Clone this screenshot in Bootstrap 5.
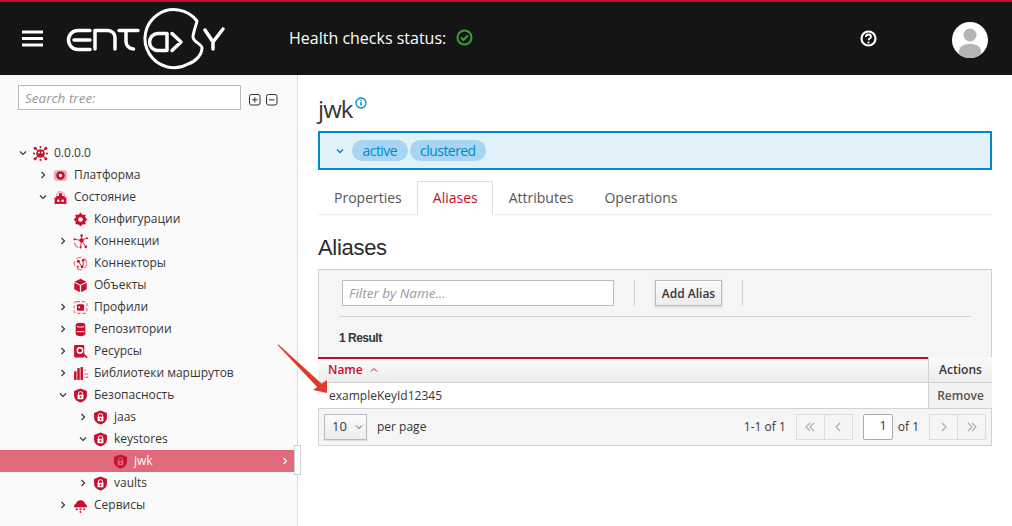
<!DOCTYPE html>
<html lang="ru"><head><meta charset="utf-8"><title>jwk</title>
<link href="https://cdn.jsdelivr.net/npm/bootstrap@5.3.0/dist/css/bootstrap.min.css" rel="stylesheet">
<style>
html,body{height:526px;overflow:hidden}
body{font-family:"Open Sans",sans-serif;font-size:12px;color:#363636;background:#fff;position:relative}
.ent-head{height:75px;background:#151515;border-top:2px solid #c80c2c;padding:0}
.ent-burger{margin-left:22px;width:21px;height:17px;display:block}
.ent-logo{margin-left:23px;display:block}
.ent-health{color:#fff;font-size:16px;margin-left:63px;line-height:20px;margin-top:-2px}
.ent-health svg{margin-left:2px}
.ent-help{margin-left:auto;margin-right:75px;display:block}
.ent-avatar{margin-right:24px;display:block;margin-top:2px}
.ent-main{height:451px}
.ent-side{width:298px;background:#fafafa;border-right:1px solid #ddd;flex:none;position:relative}
.ent-search{padding:10px 0 0 18px;height:67px}
.ent-search input{width:223px;height:25px;border:1px solid #bbb;border-radius:0;font-size:13.5px;font-style:italic;padding:0 6px;line-height:23px;background:#fff;font-family:"Open Sans",sans-serif}
.ent-search input::placeholder{color:#999;opacity:1}
.ent-search svg{display:block;margin-top:8px}
.ent-tree{list-style:none;margin:0;padding:0;width:294px}
.ent-tree li{height:22px;line-height:22px;display:flex;align-items:center;color:#363636;white-space:nowrap;font-size:12px}
.ent-tree .ic{width:15px;height:15px;margin:0 6px 0 0;flex:none}
.ent-tree .chv{width:8px;height:8px;flex:none;margin-right:6px}
.lv0{padding-left:19px}.lv1{padding-left:39px}.lv2{padding-left:59px}.lv3{padding-left:79px}.lv4{padding-left:99px}
.nochv{width:8px;margin-right:6px;flex:none;display:block}
.ent-tree li.sel{background:#e1697c;color:#fff;position:relative}
.sel-arrow{margin-left:auto;margin-right:5px;width:8px;height:8px}
.ent-handle{position:absolute;left:294px;top:370px;width:7px;height:30px;background:#fff;border:1px solid #d1d1d1}
.ent-content{flex:1;padding:0 20px;min-width:0}
.ent-title{font-size:24px;line-height:32px;letter-spacing:-.9px;margin:18px 0 0;padding:0;font-weight:400;display:flex;color:#363636;height:38px}
.ent-title svg{margin:4px 0 0 2px}
.ent-labels{height:39px;border:2px solid #0088ce;background:#e2f2fa;padding:0 0 0 16px;gap:2px;border-radius:0}
.ent-pill{background:#a6d6f1;color:#0088ce;font-size:14px;font-weight:400;height:21px;line-height:21px;padding:0 10.5px;letter-spacing:-.55px;border-radius:11px}
.ent-labels svg{margin-right:6px}
.ent-tabs{margin-top:11px;height:34px;border-bottom:1px solid #ededed;flex-wrap:nowrap}
.ent-tabs .nav-link{font-size:14px;color:#555;padding:0 14px 0 15px;line-height:32px;height:34px;border:1px solid transparent;border-radius:0;background:none;margin:0}
.ent-tabs .nav-link.active{color:#c80c2c;border-color:#dedede #dedede #fff;background:#fff}
.ent-h2{font-family:"Liberation Sans",sans-serif;font-size:22px;font-weight:400;letter-spacing:-.3px;line-height:26px;margin:20px 0 8px;color:#2b2b2b}
.ent-tool{height:88px;background:#f5f5f5;border:1px solid #d1d1d1;border-bottom:0;padding:10px 20px 0 20px}
.ent-filter{width:272px;height:26px;margin-left:3px;border:1px solid #bbb;border-radius:0;font-size:13.5px;font-style:italic;padding:0 6px;background:#fff;font-family:"Open Sans",sans-serif}
.ent-filter::placeholder{color:#999;opacity:1}
.ent-sep{width:1px;height:26px;background:#d1d1d1;margin:0 20px}
.ent-add{height:26px;width:67px;padding:2px 0 0;font-size:12px;font-weight:600;color:#363636;background:linear-gradient(#fafafa,#ededed);border:1px solid #bbb;border-radius:0;box-shadow:0 1px 2px rgba(0,0,0,.15);white-space:nowrap}
.ent-rule{height:1px;background:#d1d1d1;margin:10px 0 0;width:632px}
.ent-count{font-family:"Liberation Sans",sans-serif;font-weight:700;font-size:12px;letter-spacing:-.5px;line-height:16px;margin-top:13px;color:#363636}
.ent-table{width:674px;margin:0;table-layout:fixed;border-collapse:separate;border-spacing:0}
.ent-table th,.ent-table td{padding:0 10px;font-size:12px;box-shadow:none;height:26px}
.ent-table th{background:linear-gradient(#fafafa,#ededed);border-bottom:1px solid #d1d1d1;font-weight:600;vertical-align:middle}
.ent-table th.nm{border-top:2px solid #c00d2b;color:#c80c2c;height:26px;padding-bottom:2px}
.ent-table th.ac{width:64px;border-left:1px solid #d1d1d1;text-align:center;padding:0;color:#363636;border-top:0}
.ent-table td{background:#fff;vertical-align:middle;border-bottom:1px solid #d1d1d1;border-left:1px solid #d1d1d1;color:#363636;font-size:12px}
.ent-table td.ac{background:#f2f2f2;text-align:center;padding:0;font-weight:600;font-size:12px;color:#555;border-right:0}
.ent-table td.kn{border-left:0;padding:1px 0 0 11px}
.ent-foot{height:37px;width:674px;background:#f5f5f5;border:1px solid #d1d1d1;border-top:0;padding:0 5px 0 5px;font-size:12px;color:#363636}
.ent-perpage{width:43px;height:26px;border:1px solid #bbb;background:linear-gradient(#fafafa,#ededed);font-size:13px;font-weight:500;padding:0 0 0 7px;box-shadow:0 1px 1px rgba(0,0,0,.1);color:#363636}
.ent-pp{margin-left:10px}
.ent-range{margin-left:auto;margin-right:10px}
.ent-pgroup{height:26px;border:1px solid #dcdcdc;background:#f5f5f5;width:57px}
.ent-pgroup span{flex:1;display:flex;align-items:center;justify-content:center;height:24px}
.ent-pgroup span+span{border-left:1px solid #dcdcdc}
.ent-page{width:30px;height:26px;border:1px solid #aaa;border-radius:2px;background:#fff;text-align:right;padding:0 5px;font-size:12.5px;line-height:22px;margin:0 5px 0 10px}
.ent-of{margin-right:10px}
.ent-arrow{position:absolute;left:274px;top:342px}
</style></head>
<body>
<svg width="0" height="0" class="d-block position-absolute"><defs>
<symbol id="r" viewBox="0 0 8 8"><path d="M2.500 1l3 3-3 3" fill="none" stroke="currentColor" stroke-width="1.200"/></symbol>
<symbol id="d" viewBox="0 0 8 8"><path d="M1 2.500l3 3 3-3" fill="none" stroke="currentColor" stroke-width="1.200"/></symbol>
<symbol id="node" viewBox="0 0 14 14"><g fill="#c8102e"><circle cx="7" cy="7" r="4"/><circle cx="2" cy="2" r="1.400"/><circle cx="12" cy="2" r="1.400"/><circle cx="2" cy="12" r="1.400"/><circle cx="12" cy="12" r="1.400"/><circle cx="7" cy="1" r="1"/><circle cx="1" cy="7" r="1"/><circle cx="13" cy="7" r="1"/><circle cx="7" cy="13" r="1"/></g><path d="M2 2l10 10M12 2L2 12" stroke="#c8102e"/><circle cx="5.500" cy="6" r=".9" fill="#fff"/><circle cx="8.500" cy="6" r=".9" fill="#fff"/></symbol>
<symbol id="plat" viewBox="0 0 14 14"><rect x="1" y="2" width="12" height="10" rx="2" fill="#f2a9b5"/><circle cx="7" cy="7" r="4" fill="#c8102e"/><circle cx="7" cy="7" r="1.600" fill="#fff"/></symbol>
<symbol id="state" viewBox="0 0 14 14"><path d="M3.500 5a3.500 3.500 0 017 0" fill="none" stroke="#e2697c" stroke-dasharray="2 1"/><rect x="5.500" y="3" width="3" height="3" fill="#c8102e"/><rect x="1.500" y="7" width="11" height="6" fill="#c8102e"/><rect x="3" y="5.500" width="8" height="2" fill="#c8102e"/><rect x="4" y="9" width="2" height="2" fill="#fff"/><rect x="8" y="9" width="2" height="2" fill="#fff"/></symbol>
<symbol id="gear" viewBox="0 0 14 14"><circle cx="7" cy="7" r="3.700" fill="none" stroke="#c8102e" stroke-width="3"/><path d="M7 .8v2M7 11.200v2M.8 7h2M11.200 7h2M2.600 2.600L4 4M10 10l1.400 1.400M2.600 11.400L4 10M10 4l1.400-1.400" stroke="#c8102e" stroke-width="1.600"/></symbol>
<symbol id="conn" viewBox="0 0 14 14"><g fill="#c8102e"><circle cx="8" cy="6" r="2"/><circle cx="8" cy="1.500" r="1.200"/><circle cx="13" cy="4" r="1"/><circle cx="1.500" cy="5" r="1"/><circle cx="12" cy="12" r="1.200"/><circle cx="7" cy="12.500" r="1"/></g><path d="M8 1.500v4l5-1.500M8 6L1.500 5M8 6l4 6M8 6l-1 6.500" stroke="#c8102e" stroke-width=".8" fill="none"/><path d="M1.500 8a5 5 0 003 4.500" stroke="#e2697c" fill="none"/></symbol>
<symbol id="ctor" viewBox="0 0 14 14"><circle cx="7" cy="7" r="5.800" fill="none" stroke="#e2697c" stroke-dasharray="5 2.500"/><g fill="#c8102e"><circle cx="5" cy="5" r="1.400"/><circle cx="9.500" cy="4" r="1.200"/><circle cx="8.500" cy="10" r="1.400"/><circle cx="4.500" cy="10" r="1"/></g><path d="M5 5l3.500 5M9.500 4v5" stroke="#c8102e" stroke-width=".8"/></symbol>
<symbol id="cube" viewBox="0 0 14 14"><path d="M7 .8l5.600 2.700L7 6.200 1.400 3.500zM1.200 4.500l5.200 2.600v6.200l-5.200-2.700zM12.800 4.500L7.600 7.100v6.200l5.200-2.700z" fill="#c8102e"/></symbol>
<symbol id="prof" viewBox="0 0 14 14"><rect x="1" y="1.500" width="12" height="11" rx="2.500" fill="none" stroke="#e2697c" stroke-dasharray="3 1.800"/><rect x="3.700" y="4" width="6.600" height="6" rx="1" fill="#c8102e"/><rect x="5" y="6" width="1.500" height="1.500" fill="#fff"/></symbol>
<symbol id="repo" viewBox="0 0 14 14"><path d="M2.500 3c0-1.400 2-2.200 4.500-2.200S11.500 1.600 11.500 3v8c0 1.400-2 2.200-4.500 2.200S2.500 12.400 2.500 11z" fill="#c8102e"/><path d="M3.500 4.200c1.700.7 5.300.7 7 0M3.500 9h7" stroke="#fff" stroke-width=".9" fill="none"/></symbol>
<symbol id="res" viewBox="0 0 14 14"><rect x="1" y="1" width="9.500" height="11.500" rx="1" fill="#c8102e"/><circle cx="6.500" cy="6" r="3.200" fill="#fff"/><circle cx="6.500" cy="6" r="1.800" fill="#c8102e"/><path d="M9 9l4.200 4" stroke="#c8102e" stroke-width="1.600"/></symbol>
<symbol id="lib" viewBox="0 0 14 14"><g fill="#c8102e"><rect x="1" y="5" width="2.300" height="8"/><rect x="4" y="2" width="2.300" height="11"/><rect x="7" y="1" width="2.300" height="12"/></g><path d="M10.500 4h1.500M10.500 7.500h2.500a1.500 1.500 0 010 3h-2.500" stroke="#e2697c" fill="none"/></symbol>
<symbol id="sec" viewBox="0 0 14 14"><path d="M7 .5l6 2.300v4.200c0 3.400-2.700 5.600-6 6.500C3.700 12.600 1 10.400 1 7V2.800z" fill="#c8102e"/><path d="M5 6.500V5.400a2 2 0 014 0v1.100" fill="none" stroke="#fff" stroke-width=".9"/><rect x="4.300" y="6.300" width="5.400" height="4.200" rx=".5" fill="#fff"/><circle cx="7" cy="8.400" r=".9" fill="#c8102e"/></symbol>
<symbol id="secs" viewBox="0 0 14 14"><path d="M7 .5l6 2.300v4.200c0 3.400-2.700 5.600-6 6.500C3.700 12.600 1 10.400 1 7V2.800z" fill="#c8102e"/><path d="M5 6.500V5.400a2 2 0 014 0v1.100" fill="none" stroke="#e1697c" stroke-width=".9"/><rect x="4.300" y="6.300" width="5.400" height="4.200" rx=".5" fill="#e1697c"/><circle cx="7" cy="8.400" r=".9" fill="#c8102e"/></symbol>
<symbol id="cloud" viewBox="0 0 14 14"><path d="M1 8a2.500 2.500 0 011.800-2.600A4.300 4.300 0 017 2a4.200 4.200 0 014.200 3.400A2.500 2.500 0 0113 8z" fill="#c8102e"/><path d="M1 8h12" stroke="#c8102e" stroke-width="1.500"/><g fill="#c8102e"><circle cx="3.500" cy="10.500" r="1"/><circle cx="7" cy="10.500" r="1"/><circle cx="10.500" cy="10.500" r="1"/><circle cx="7" cy="13" r=".9"/></g></symbol>
</defs></svg>

<header class="navbar ent-head flex-nowrap">
  <svg class="ent-burger" viewBox="0 0 21 17"><path d="M0 2h21M0 8.500h21M0 15h21" stroke="#fff" stroke-width="3"/></svg>
  <svg class="ent-logo" width="160" height="73" viewBox="66 2 160 73" fill="none" stroke="#fff" stroke-width="3.500" stroke-linecap="round" stroke-linejoin="round">
    <path d="M90 30.500H78a9.500 9.500 0 000 19h12M74 40h16"/>
    <path d="M95 49V30.500h13a7 7 0 017 7V49"/>
    <path d="M119 30.500h19M126 30.500v11a7.500 7.500 0 007.500 7.500"/>
    <path d="M197 21A29 29 0 1 0 188 64C195 62 202 55 202 48c0-4-9-6-9-11 0-4 3-11 4-16z" stroke-width="3"/>
    <path d="M167 33.500h-9a8.500 8.500 0 000 17h9zM172 33.500l9 8.500-9 8.500"/>
    <path d="M205 30l8 12 10-13M213 42v7"/>
  </svg>
  <div class="ent-health d-flex align-items-center gap-2">Health checks status:
    <svg width="17" height="17" viewBox="0 0 17 17" fill="none" stroke="#3f9c35" stroke-width="2"><circle cx="8.500" cy="8.500" r="7"/><path d="M5 8.500l2.500 2.500 4.300-4.500"/></svg></div>
  <svg class="ent-help" width="17" height="17" viewBox="0 0 17 17" fill="none" stroke="#fff" stroke-width="2.200"><circle cx="8.500" cy="8.500" r="7"/><path d="M6 7a2.500 2.500 0 115 0c0 1.600-2.500 1.600-2.500 3.200" stroke-width="1.800"/><circle cx="8.500" cy="12.500" r="1.100" fill="#fff" stroke="none"/></svg>
  <svg class="ent-avatar" width="36" height="36" viewBox="0 0 36 36"><defs><clipPath id="c"><circle cx="18" cy="18" r="18"/></clipPath></defs><circle cx="18" cy="18" r="18" fill="#fff"/><g clip-path="url(#c)" fill="#b5b5b5"><circle cx="18" cy="13" r="6.500"/><path d="M7 36V30c0-6 5-8 11-8s11 2 11 8v6z"/></g></svg>
</header>

<div class="d-flex ent-main">
  <aside class="ent-side">
    <div class="ent-search d-flex align-items-start">
      <input class="form-control" placeholder="Search tree:">
      <svg class="ms-2" width="30" height="14" viewBox="0 0 30 14" fill="none" stroke="#333"><rect x=".5" y="1.500" width="10.500" height="10.500" rx="2"/><path d="M3 6.800h5.500M5.800 4v5.500"/><rect x="17.500" y="1.500" width="10.500" height="10.500" rx="2"/><path d="M20 6.800h5.500"/></svg>
    </div>
    <ul class="ent-tree">
      <li class="lv0"><svg class="chv"><use href="#d"/></svg><svg class="ic"><use href="#node"/></svg>0.0.0.0</li>
      <li class="lv1"><svg class="chv"><use href="#r"/></svg><svg class="ic"><use href="#plat"/></svg>Платформа</li>
      <li class="lv1"><svg class="chv"><use href="#d"/></svg><svg class="ic"><use href="#state"/></svg>Состояние</li>
      <li class="lv2"><i class="nochv"></i><svg class="ic"><use href="#gear"/></svg>Конфигурации</li>
      <li class="lv2"><svg class="chv"><use href="#r"/></svg><svg class="ic"><use href="#conn"/></svg>Коннекции</li>
      <li class="lv2"><i class="nochv"></i><svg class="ic"><use href="#ctor"/></svg>Коннекторы</li>
      <li class="lv2"><i class="nochv"></i><svg class="ic"><use href="#cube"/></svg>Объекты</li>
      <li class="lv2"><svg class="chv"><use href="#r"/></svg><svg class="ic"><use href="#prof"/></svg>Профили</li>
      <li class="lv2"><svg class="chv"><use href="#r"/></svg><svg class="ic"><use href="#repo"/></svg>Репозитории</li>
      <li class="lv2"><svg class="chv"><use href="#r"/></svg><svg class="ic"><use href="#res"/></svg>Ресурсы</li>
      <li class="lv2"><svg class="chv"><use href="#r"/></svg><svg class="ic"><use href="#lib"/></svg>Библиотеки маршрутов</li>
      <li class="lv2"><svg class="chv"><use href="#d"/></svg><svg class="ic"><use href="#sec"/></svg>Безопасность</li>
      <li class="lv3"><svg class="chv"><use href="#r"/></svg><svg class="ic"><use href="#sec"/></svg>jaas</li>
      <li class="lv3"><svg class="chv"><use href="#d"/></svg><svg class="ic"><use href="#sec"/></svg>keystores</li>
      <li class="lv4 sel"><i class="nochv"></i><svg class="ic"><use href="#secs"/></svg>jwk<svg class="sel-arrow"><use href="#r"/></svg></li>
      <li class="lv3"><svg class="chv"><use href="#r"/></svg><svg class="ic"><use href="#sec"/></svg>vaults</li>
      <li class="lv2"><svg class="chv"><use href="#r"/></svg><svg class="ic"><use href="#cloud"/></svg>Сервисы</li>
    </ul>
    <div class="ent-handle"></div>
  </aside>
  <main class="ent-content">
    <h1 class="ent-title">jwk<svg width="12" height="12" viewBox="0 0 12 12" fill="none" stroke="#0088ce" stroke-width="1.300"><circle cx="6" cy="6" r="5"/><path d="M6 5v3.500M6 2.800v1.200" stroke-width="1.500"/></svg></h1>
    <div class="d-flex align-items-center ent-labels">
      <svg width="8" height="8" viewBox="0 0 8 8" fill="none" stroke="#0088ce" stroke-width="1.500"><path d="M1 2.500l3 3 3-3"/></svg>
      <span class="badge ent-pill">active</span><span class="badge ent-pill">clustered</span>
    </div>
    <ul class="nav nav-tabs ent-tabs">
      <li class="nav-item"><a class="nav-link" href="#">Properties</a></li>
      <li class="nav-item"><a class="nav-link active" href="#">Aliases</a></li>
      <li class="nav-item"><a class="nav-link" href="#">Attributes</a></li>
      <li class="nav-item"><a class="nav-link" href="#">Operations</a></li>
    </ul>
    <h2 class="ent-h2">Aliases</h2>
    <div class="ent-tool">
      <div class="d-flex align-items-center">
        <input class="form-control ent-filter" placeholder="Filter by Name...">
        <span class="ent-sep"></span>
        <button class="btn ent-add">Add Alias</button>
        <span class="ent-sep"></span>
      </div>
      <div class="ent-rule"></div>
      <div class="ent-count">1 Result</div>
    </div>
    <table class="table ent-table">
      <thead><tr><th class="nm">Name <svg class="ms-1" width="8" height="6" viewBox="0 0 8 6" fill="none" stroke="#c80c2c"><path d="M1 4.500l3-3 3 3"/></svg></th><th class="ac">Actions</th></tr></thead>
      <tbody><tr><td class="kn">exampleKeyId12345</td><td class="ac">Remove</td></tr></tbody>
    </table>
    <div class="d-flex align-items-center ent-foot">
      <div class="d-flex align-items-center ent-perpage">10<svg class="ms-2" width="8" height="6" viewBox="0 0 8 6" fill="none" stroke="#555"><path d="M1 1.500l3 3 3-3"/></svg></div>
      <span class="ent-pp">per page</span>
      <span class="ent-range">1-1 of 1</span>
      <div class="d-flex ent-pgroup">
        <span><svg width="10" height="10" viewBox="0 0 10 10" fill="none" stroke="#aaa" stroke-width="1.100"><path d="M5 1L1 5l4 4M9 1L5 5l4 4"/></svg></span>
        <span><svg width="10" height="10" viewBox="0 0 10 10" fill="none" stroke="#aaa" stroke-width="1.100"><path d="M7 1L3 5l4 4"/></svg></span>
      </div>
      <div class="ent-page">1</div><span class="ent-of">of 1</span>
      <div class="d-flex ent-pgroup">
        <span><svg width="10" height="10" viewBox="0 0 10 10" fill="none" stroke="#aaa" stroke-width="1.100"><path d="M3 1l4 4-4 4"/></svg></span>
        <span><svg width="10" height="10" viewBox="0 0 10 10" fill="none" stroke="#aaa" stroke-width="1.100"><path d="M1 1l4 4-4 4M5 1l4 4-4 4"/></svg></span>
      </div>
    </div>
  </main>
</div>
<svg class="ent-arrow" width="56" height="56" viewBox="0 0 56 56"><path d="M3.500 3l1-.5L48 42l-4 4z" fill="#e03b2a"/><path d="M53 51V38L39 48z" fill="#e03b2a"/></svg>
<script src="https://cdn.jsdelivr.net/npm/bootstrap@5.3.0/dist/js/bootstrap.bundle.min.js"></script>
</body></html>
